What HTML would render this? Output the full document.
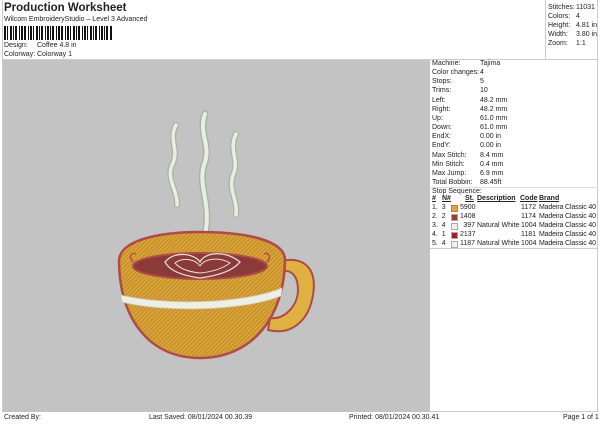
<!DOCTYPE html>
<html><head><meta charset="utf-8"><style>
body{margin:0;width:600px;height:424px;background:#fff;position:relative;overflow:hidden;font-family:"Liberation Sans",sans-serif;font-size:7px;color:#222}
.a{position:absolute;white-space:nowrap;line-height:9px}
.sw{display:block;width:5px;height:5px;border:1px solid #aaa;margin:1px 0 2px 0}
</style></head><body>
<div class="a" style="left:4px;top:2px;font-size:11.5px;font-weight:bold;line-height:13px">Production Worksheet</div>
<div class="a" style="left:4px;top:15px">Wilcom EmbroideryStudio – Level 3 Advanced</div>
<svg class="a" style="left:4px;top:26px" width="108" height="14">
<g fill="#111">
<rect x="0" width="2" height="14"/><rect x="3" width="1" height="14"/><rect x="6" width="2" height="14"/><rect x="9" width="1" height="14"/><rect x="11" width="2" height="14"/><rect x="15" width="1" height="14"/><rect x="17" width="2" height="14"/><rect x="20" width="2" height="14"/><rect x="24" width="1" height="14"/><rect x="26" width="2" height="14"/><rect x="29" width="1" height="14"/><rect x="32" width="2" height="14"/><rect x="35" width="1" height="14"/><rect x="37" width="2" height="14"/><rect x="41" width="1" height="14"/><rect x="43" width="2" height="14"/><rect x="46" width="1" height="14"/><rect x="48" width="2" height="14"/><rect x="52" width="1" height="14"/><rect x="54" width="2" height="14"/><rect x="57" width="2" height="14"/><rect x="61" width="1" height="14"/><rect x="63" width="2" height="14"/><rect x="66" width="1" height="14"/><rect x="69" width="2" height="14"/><rect x="72" width="1" height="14"/><rect x="74" width="2" height="14"/><rect x="78" width="1" height="14"/><rect x="80" width="2" height="14"/><rect x="83" width="1" height="14"/><rect x="86" width="2" height="14"/><rect x="89" width="1" height="14"/><rect x="91" width="2" height="14"/><rect x="95" width="1" height="14"/><rect x="97" width="2" height="14"/><rect x="100" width="1" height="14"/><rect x="102" width="2" height="14"/><rect x="106" width="2" height="14"/>
</g></svg>
<div class="a" style="left:4px;top:41px">Design:</div><div class="a" style="left:37px;top:41px">Coffee 4.8 in</div>
<div class="a" style="left:4px;top:50px">Colorway:</div><div class="a" style="left:37px;top:50px">Colorway 1</div>

<div style="position:absolute;left:2px;top:0;width:596px;height:412px;border:1px solid #ccc;box-sizing:border-box;border-top:none"></div>
<div style="position:absolute;left:545px;top:0;width:1px;height:59px;background:#ccc"></div>
<div style="position:absolute;left:2px;top:59px;width:596px;height:1px;background:#ccc"></div>
<div style="position:absolute;left:3px;top:60px;width:427px;height:352px;background:#c3c3c3"></div>
<div style="position:absolute;left:430px;top:248px;width:168px;height:1px;background:#ccc"></div>
<div style="position:absolute;left:430px;top:187px;width:168px;height:1px;background:#ddd"></div>

<div class="a" style="left:548px;top:3px">Stitches:<br>Colors:<br>Height:<br>Width:<br>Zoom:</div>
<div class="a" style="left:576px;top:3px">11031<br>4<br>4.81 in<br>3.80 in<br>1:1</div>

<div class="a" style="left:432px;top:59px;line-height:9.15px">Machine:<br>Color changes:<br>Stops:<br>Trims:<br>Left:<br>Right:<br>Up:<br>Down:<br>EndX:<br>EndY:<br>Max Stitch:<br>Min Stitch:<br>Max Jump:<br>Total Bobbin:<br>Stop Sequence:</div>
<div class="a" style="left:480px;top:59px;line-height:9.15px">Tajima<br>4<br>5<br>10<br>48.2 mm<br>48.2 mm<br>61.0 mm<br>61.0 mm<br>0.00 in<br>0.00 in<br>8.4 mm<br>0.4 mm<br>6.9 mm<br>88.45ft</div>

<div class="a" style="left:432px;top:194px;font-weight:bold;text-decoration:underline">#</div>
<div class="a" style="left:442px;top:194px;font-weight:bold;text-decoration:underline">N#</div>
<div class="a" style="left:465px;top:194px;font-weight:bold;text-decoration:underline">St.</div>
<div class="a" style="left:477px;top:194px;font-weight:bold;text-decoration:underline">Description</div>
<div class="a" style="left:520px;top:194px;font-weight:bold;text-decoration:underline">Code</div>
<div class="a" style="left:539px;top:194px;font-weight:bold;text-decoration:underline">Brand</div>
<div class="a" style="left:432px;top:203px;line-height:9px">1.&nbsp; 3<br>2.&nbsp; 2<br>3.&nbsp; 4<br>4.&nbsp; 1<br>5.&nbsp; 4</div>
<div class="a" style="left:451px;top:204px;line-height:9px"><span class="sw" style="background:#e3a040;border-color:#c08030"></span><span class="sw" style="background:#9a3a36"></span><span class="sw" style="background:#f0f0ee"></span><span class="sw" style="background:#a31a2a"></span><span class="sw" style="background:#f0f0ee"></span></div>
<div class="a" style="left:460px;top:203px;line-height:9px;width:15px;text-align:right">5900<br>1408<br>397<br>2137<br>1187</div>
<div class="a" style="left:477px;top:203px;line-height:9px"><br><br>Natural White<br><br>Natural White</div>
<div class="a" style="left:521px;top:203px;line-height:9px">1172<br>1174<br>1004<br>1181<br>1004</div>
<div class="a" style="left:539px;top:203px;line-height:9px;letter-spacing:-0.15px">Madeira Classic 40<br>Madeira Classic 40<br>Madeira Classic 40<br>Madeira Classic 40<br>Madeira Classic 40</div>

<div class="a" style="left:4px;top:413px">Created By:</div>
<div class="a" style="left:149px;top:413px">Last Saved: 08/01/2024 00.30.39</div>
<div class="a" style="left:349px;top:413px">Printed: 08/01/2024 00.30.41</div>
<div class="a" style="left:563px;top:413px">Page 1 of 1</div>

<svg style="position:absolute;left:0;top:0" width="430" height="412">
<defs>
<pattern id="st" width="3" height="3" patternUnits="userSpaceOnUse" patternTransform="rotate(45)"><rect width="3" height="3" fill="#d9a33a"/><rect width="1" height="3" fill="#c08a28"/></pattern>
</defs>
<g fill="none" stroke-linecap="round">
<path d="M176 125 C168 140,180 150,172 165 C166 180,178 190,177 205" stroke="#a8b4a4" stroke-width="6"/>
<path d="M176 125 C168 140,180 150,172 165 C166 180,178 190,177 205" stroke="#e8efe2" stroke-width="3.5"/>
<path d="M205 114 C198 135,212 145,204 165 C198 185,210 200,206 230" stroke="#a8b4a4" stroke-width="7"/>
<path d="M205 114 C198 135,212 145,204 165 C198 185,210 200,206 230" stroke="#e8efe2" stroke-width="4"/>
<path d="M236 134 C228 150,240 160,233 175 C228 190,238 200,236 215" stroke="#a8b4a4" stroke-width="6"/>
<path d="M236 134 C228 150,240 160,233 175 C228 190,238 200,236 215" stroke="#e8efe2" stroke-width="3.5"/>
</g>
<path d="M278 262 C300 255,318 265,313 295 C309 320,292 336,268 330 L270 318 C285 320,298 305,298 290 C298 275,290 268,280 272 Z" fill="#e0b040" stroke="#b04a48" stroke-width="2"/>
<path d="M119 262 C118 240,160 232,200 232 C245 232,285 240,285 260 C284 320,250 358,200 358 C150 358,120 320,119 262 Z" fill="url(#st)" stroke="#b04a48" stroke-width="2.5"/>
<ellipse cx="200" cy="266" rx="67" ry="13" fill="#8a3a38" stroke="#b04a48" stroke-width="2"/>
<path d="M165 262 C175 250,195 254,200 262 C205 252,225 250,240 262 C232 272,215 276,200 278 C185 276,170 272,165 262Z" fill="none" stroke="#e8ddd8" stroke-width="1.3"/>
<path d="M175 263 C183 257,195 259,200 266 C205 258,220 257,230 263 C222 269,210 272,200 273 C190 272,180 269,175 263Z" fill="none" stroke="#e8ddd8" stroke-width="1"/>
<path d="M133 262 C128 256,132 252,136 254 M267 262 C272 256,268 252,264 254" fill="none" stroke="#b04a48" stroke-width="1.5"/>
<path d="M121 295 C160 305,240 305,282 288 L281 296 C240 312,160 312,122 302 Z" fill="#eeeee4" stroke="#c8ccbe" stroke-width="0.8"/>
</svg>
</body></html>
